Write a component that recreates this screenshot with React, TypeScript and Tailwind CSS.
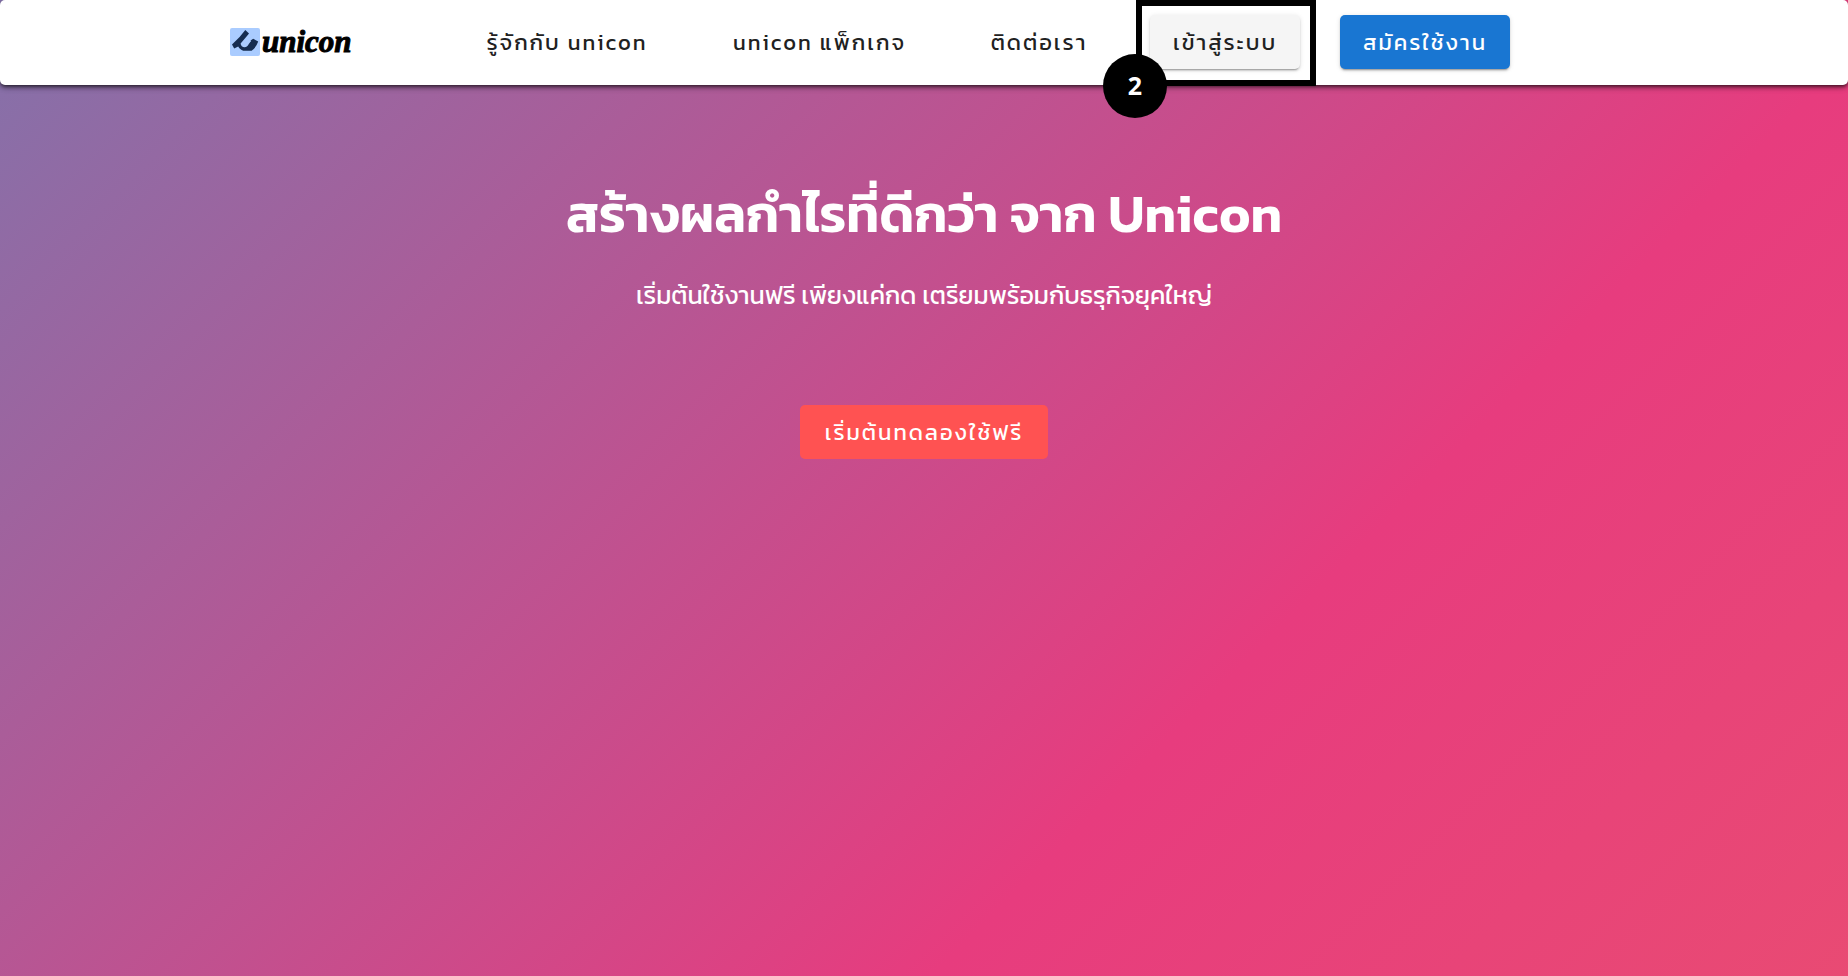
import { ReactNode } from 'react';
import clsx from 'clsx';

const navLinks = [
  { label: 'รู้จักกับ unicon', href: '#about', width: 'w-[208px]' },
  { label: 'unicon แพ็กเกจ', href: '#packages', width: 'w-[217px]' },
  { label: 'ติดต่อเรา', href: '#contact', width: 'w-[142px]' }
];

function Logo() {
  return (
    <a href="#home" className="flex w-[121px] shrink-0 items-center gap-[2px] text-black">
      <svg className="shrink-0" width="30" height="28" viewBox="0 0 30 28" aria-hidden="true">
        <rect width="30" height="28" rx="2" fill="#aaccff" />
        <path
          d="M15.3 2 L19 5.6 L17.4 7.4 L10.6 15.4 C10.8 17.6 12.4 19 14.6 19.2 C18.4 19.2 18.8 14.6 21 13.4 L20.6 12.6 L23.2 10.8 L28.2 13.6 C26.6 17.6 24.6 20.8 21.6 22.8 L13.2 22.8 C11 21.8 9.4 20.4 8.2 18.4 L4.2 20.4 L2 16.4 L9.6 9 Z"
          fill="#162d50"
        />
      </svg>
      <span className="font-['Liberation_Serif',serif] text-[31px] leading-8 font-bold italic [-webkit-text-stroke:1px_black]">
        unicon
      </span>
    </a>
  );
}

function Button({ children, className }: { children: ReactNode; className?: string }) {
  return (
    <button
      type="button"
      className={clsx(
        'h-[54px] shrink-0 rounded-[5px] text-center text-[22px] font-normal tracking-[2px] whitespace-nowrap',
        className
      )}
    >
      {children}
    </button>
  );
}

export default function App() {
  return (
    <div className="min-h-screen bg-[linear-gradient(-45deg,#ee7752,#e73c7e,#23a6d5,#23d5ab)] bg-[length:400%_400%] bg-[position:75%_50%] font-[Kanit,'Noto_Sans_Thai','Noto_Sans',sans-serif]">
      <header className="relative rounded-[5px] bg-white px-6 pb-px shadow-[0_2px_4px_-1px_rgba(0,0,0,0.8),0_4px_5px_rgba(0,0,0,0.14),0_1px_10px_rgba(0,0,0,0.12)]">
        <div className="mx-auto flex h-[84px] max-w-[1388px] items-center">
          <Logo />
          <nav className="ml-28 flex items-center gap-10">
            {navLinks.map((link) => (
              <a
                key={link.href}
                href={link.href}
                className={clsx(
                  'shrink-0 text-center text-[22px] tracking-[2px] whitespace-nowrap text-[#212121]',
                  link.width
                )}
              >
                {link.label}
              </a>
            ))}
            <div className="relative flex">
              <Button className="w-[150px] bg-[#f5f5f5] text-[#212121] shadow-[0_3px_1px_-2px_rgba(0,0,0,0.2),0_2px_2px_rgba(0,0,0,0.14),0_1px_5px_rgba(0,0,0,0.12)]">
                เข้าสู่ระบบ
              </Button>
              {/* Step marker */}
              <div className="pointer-events-none absolute -top-[15px] -right-4 -bottom-[17px] -left-[14px] border-[6px] border-black"></div>
              <div className="absolute -bottom-[49px] -left-[47px] flex size-16 items-center justify-center rounded-full bg-black font-['Open_Sans',sans-serif] text-[25px] font-bold text-white">
                2
              </div>
            </div>
            <Button className="w-[170px] bg-[#1976d2] text-white shadow-[0_3px_1px_-2px_rgba(0,0,0,0.2),0_2px_2px_rgba(0,0,0,0.14),0_1px_5px_rgba(0,0,0,0.12)]">
              สมัครใช้งาน
            </Button>
          </nav>
        </div>
      </header>

      <main className="flex flex-col items-center px-6 pt-[93px] text-center text-white">
        <h1 className="text-[53px] leading-[72px] font-semibold">สร้างผลกำไรที่ดีกว่า จาก Unicon</h1>
        <p className="mt-[25px] text-[25px] leading-10">เริ่มต้นใช้งานฟรี เพียงแค่กด เตรียมพร้อมกับธรุกิจยุคใหญ่</p>
        <Button className="mt-[90px] w-[248px] bg-[#ff5252] text-white">เริ่มต้นทดลองใช้ฟรี</Button>
      </main>
    </div>
  );
}
